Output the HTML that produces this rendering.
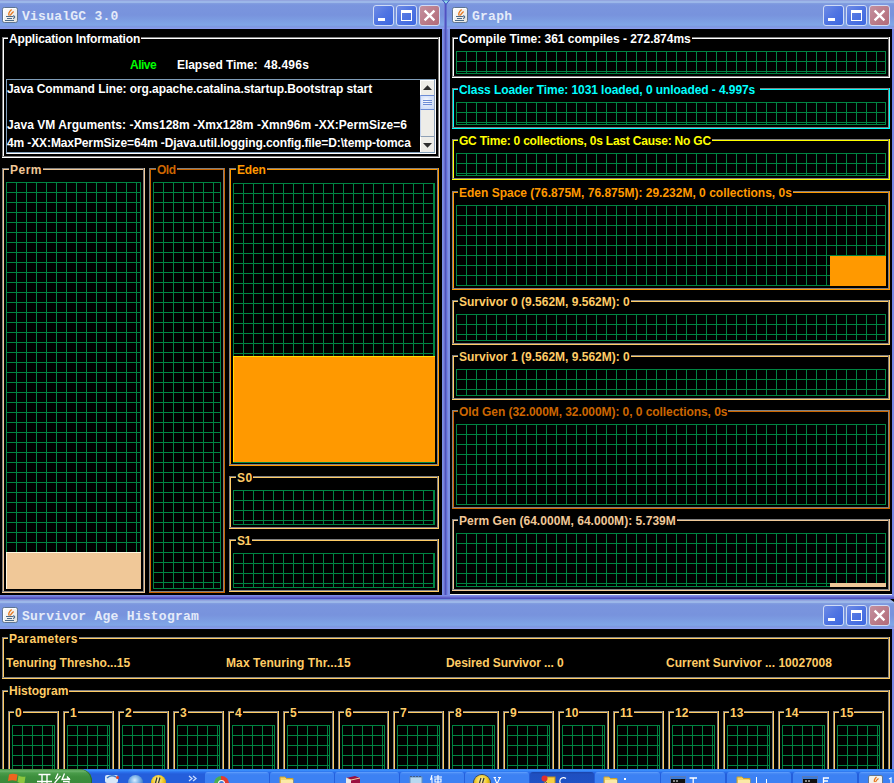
<!DOCTYPE html><html><head><meta charset="utf-8"><style>
*{margin:0;padding:0;box-sizing:border-box}
html,body{width:894px;height:783px;overflow:hidden;background:#000}
body{position:relative}
body>div,body>span,body>svg{position:absolute}
.t{font-family:'Liberation Sans',sans-serif;font-weight:bold;font-size:12px;line-height:14px;white-space:pre}
.g{background-image:linear-gradient(to right,#008442 1px,transparent 1px),linear-gradient(to bottom,#008442 1px,transparent 1px);background-size:10px 10px;box-shadow:inset -1px -1px 0 #008442}
.tb{background:linear-gradient(to bottom,#93a5df 0,#93a5df 1px,#9cb7e9 1px,#9cb7e9 3px,#84a0e0 3px,#7a95de 5px,#7893dd 15px,#80a6e7 25px,#7c95de 27px,#8a9eee 28px,#8a9eee 29px)}
.tt{font-family:'Liberation Mono',monospace;font-size:13px;line-height:14px;color:#e4ebf9;white-space:pre;font-weight:bold;letter-spacing:0.25px}
.ic{width:16px;height:16px}
.bt{width:21px;height:21px;border:1px solid #d0dcf6;border-radius:3px;background:linear-gradient(135deg,#6e8ce6 0,#4f74e2 50%,#3e68e0 100%)}
.bt.cl{background:linear-gradient(135deg,#c4909e,#b26a78)}
.sb{background:#eeede8;border-top:1px solid #fff;border-left:1px solid #fff}
.th{background:radial-gradient(ellipse at 40% 40%,#fff 0,#dfe8fb 40%,#c4d5f4 100%);border-top:1px solid #6c8cd6;border-bottom:1px solid #6c8cd6;border-left:1px solid #a8bff0}
.task{background:linear-gradient(to bottom,#3168d5 0,#3d95ff 1px,#2b72ee 3px,#245edb 5px,#245edb 14px)}
.start{background:linear-gradient(to bottom,#3a8a3a 0,#6cb46c 2px,#4a9c4a 4px,#3c8e3c 8px,#3a8a3a 14px);border-radius:0 12px 0 0;box-shadow:inset -1px 0 0 #2a6a2a}
.tbtn{background:linear-gradient(to bottom,#6aa8ff 0,#4a8cf6 1px,#3c81f3 3px,#3c81f3 14px);border-radius:3px 3px 0 0}
.tbtn.act{background:linear-gradient(to bottom,#1a44a8 0,#1e4fc0 2px,#1f52c6 14px)}
</style></head><body><div style="left:442px;top:29px;width:8px;height:570px;background:linear-gradient(to right,#7b8fe8 0px,#7b8fe8 1px,#7586de 1px,#7586de 2px,#6a6cc8 2px,#6a6cc8 3px,#4f52bd 3px,#4f52bd 4px,#5c6dd2 4px,#5c6dd2 5px,#7a80dc 5px,#7a80dc 6px,#7a92e6 6px,#7a92e6 7px,#7a90e4 7px,#7a90e4 8px);"></div>
<div style="left:0px;top:595px;width:894px;height:5px;background:linear-gradient(to bottom,#7b8ae6 0px,#7b8ae6 1px,#7078d8 1px,#7078d8 2px,#6062c8 2px,#6062c8 3px,#4e52be 3px,#4e52be 4px,#7090dc 4px,#7090dc 5px);"></div>
<div style="left:892px;top:29px;width:2px;height:566px;background:#7888e4;"></div>
<div style="left:892px;top:629px;width:2px;height:140px;background:#7888e4;"></div>
<div class="tb" style="left:0px;top:0px;width:445px;height:29px"></div>
<div class="ic" style="left:2px;top:7px"><svg width="16" height="16" viewBox="0 0 16 16"><defs><linearGradient id="ig02" x1="0" y1="0" x2="1" y2="1"><stop offset="0" stop-color="#ffffff"/><stop offset="1" stop-color="#e2e2de"/></linearGradient></defs><rect x="0.5" y="0.5" width="15" height="15" rx="1.8" fill="url(#ig02)" stroke="#5f7590"/><path d="M1.5 14 V2.5 Q1.5 1.5 2.5 1.5 H14" stroke="#ffffff" stroke-width="1" fill="none"/><path d="M7.2 8.6 Q5.6 6.2 9.6 2.6 M8.2 8.6 Q9.2 6.4 11.6 4.4" stroke="#e8761c" stroke-width="1.3" fill="none"/><path d="M4 9.5 H11 M5 11.5 H10 M3 13.5 H12" stroke="#4d6b88" stroke-width="1"/><path d="M11.2 8.6 Q14.2 10 11.2 11.6" stroke="#4d6b88" stroke-width="1.2" fill="none"/></svg></div>
<span class="tt" style="left:22px;top:10px">VisualGC 3.0</span>
<div class="bt" style="left:373px;top:5px"><div style="position:absolute;left:4px;top:12px;width:7px;height:3px;background:#fff"></div></div>
<div class="bt" style="left:396px;top:5px"><div style="position:absolute;left:4px;top:4px;width:9px;height:7px;border:1px solid #fff;border-top-width:3px;box-sizing:content-box"></div></div>
<div class="bt cl" style="left:419px;top:5px"><svg width="21" height="21" style="position:absolute;left:0;top:0"><path d="M4.6 4.6 L14.4 14.4 M14.4 4.6 L4.6 14.4" stroke="#fff" stroke-width="2.3"/></svg></div>
<div class="tb" style="left:446px;top:0px;width:448px;height:29px"></div>
<div class="ic" style="left:452px;top:7px"><svg width="16" height="16" viewBox="0 0 16 16"><defs><linearGradient id="ig0452" x1="0" y1="0" x2="1" y2="1"><stop offset="0" stop-color="#ffffff"/><stop offset="1" stop-color="#e2e2de"/></linearGradient></defs><rect x="0.5" y="0.5" width="15" height="15" rx="1.8" fill="url(#ig0452)" stroke="#5f7590"/><path d="M1.5 14 V2.5 Q1.5 1.5 2.5 1.5 H14" stroke="#ffffff" stroke-width="1" fill="none"/><path d="M7.2 8.6 Q5.6 6.2 9.6 2.6 M8.2 8.6 Q9.2 6.4 11.6 4.4" stroke="#e8761c" stroke-width="1.3" fill="none"/><path d="M4 9.5 H11 M5 11.5 H10 M3 13.5 H12" stroke="#4d6b88" stroke-width="1"/><path d="M11.2 8.6 Q14.2 10 11.2 11.6" stroke="#4d6b88" stroke-width="1.2" fill="none"/></svg></div>
<span class="tt" style="left:472px;top:10px">Graph</span>
<div style="left:444px;top:3px;width:3px;height:26px;background:linear-gradient(to right,#7078d4 0,#7078d4 1px,#5052c0 1px,#5052c0 2px,#6070d0 2px);"></div>
<svg style="position:absolute;left:442px;top:0" width="8" height="6"><path d="M0.5 0 L7.5 0 L4 4.5 Z" fill="#8cd8e8" stroke="#4050c0" stroke-width="1"/></svg>
<div class="bt" style="left:823px;top:5px"><div style="position:absolute;left:4px;top:12px;width:7px;height:3px;background:#fff"></div></div>
<div class="bt" style="left:846px;top:5px"><div style="position:absolute;left:4px;top:4px;width:9px;height:7px;border:1px solid #fff;border-top-width:3px;box-sizing:content-box"></div></div>
<div class="bt cl" style="left:869px;top:5px"><svg width="21" height="21" style="position:absolute;left:0;top:0"><path d="M4.6 4.6 L14.4 14.4 M14.4 4.6 L4.6 14.4" stroke="#fff" stroke-width="2.3"/></svg></div>
<div class="tb" style="left:0px;top:600px;width:894px;height:29px"></div>
<div class="ic" style="left:2px;top:607px"><svg width="16" height="16" viewBox="0 0 16 16"><defs><linearGradient id="ig6002" x1="0" y1="0" x2="1" y2="1"><stop offset="0" stop-color="#ffffff"/><stop offset="1" stop-color="#e2e2de"/></linearGradient></defs><rect x="0.5" y="0.5" width="15" height="15" rx="1.8" fill="url(#ig6002)" stroke="#5f7590"/><path d="M1.5 14 V2.5 Q1.5 1.5 2.5 1.5 H14" stroke="#ffffff" stroke-width="1" fill="none"/><path d="M7.2 8.6 Q5.6 6.2 9.6 2.6 M8.2 8.6 Q9.2 6.4 11.6 4.4" stroke="#e8761c" stroke-width="1.3" fill="none"/><path d="M4 9.5 H11 M5 11.5 H10 M3 13.5 H12" stroke="#4d6b88" stroke-width="1"/><path d="M11.2 8.6 Q14.2 10 11.2 11.6" stroke="#4d6b88" stroke-width="1.2" fill="none"/></svg></div>
<span class="tt" style="left:22px;top:610px">Survivor Age Histogram</span>
<svg style="position:absolute;left:890px;top:599px" width="4" height="3"><path d="M0 0 H4 V3 Z" fill="#000"/></svg>
<div class="bt" style="left:823px;top:605px"><div style="position:absolute;left:4px;top:12px;width:7px;height:3px;background:#fff"></div></div>
<div class="bt" style="left:846px;top:605px"><div style="position:absolute;left:4px;top:4px;width:9px;height:7px;border:1px solid #fff;border-top-width:3px;box-sizing:content-box"></div></div>
<div class="bt cl" style="left:869px;top:605px"><svg width="21" height="21" style="position:absolute;left:0;top:0"><path d="M4.6 4.6 L14.4 14.4 M14.4 4.6 L4.6 14.4" stroke="#fff" stroke-width="2.3"/></svg></div>
<div style="left:2px;top:37px;width:437px;height:120px;border:1px solid #808080"></div>
<div style="left:3px;top:38px;width:435px;height:1px;background:#ffffff"></div>
<div style="left:3px;top:38px;width:1px;height:118px;background:#ffffff"></div>
<div style="left:2px;top:157px;width:438px;height:1px;background:#ffffff"></div>
<div style="left:439px;top:37px;width:1px;height:121px;background:#ffffff"></div>
<span class="t" style="left:8px;top:32px;color:#ffffff;padding:0 1px 0 1px;background:#000;letter-spacing:-0.155px;">Application Information</span>
<span class="t" style="left:130px;top:58px;color:#00ff00;letter-spacing:-0.500px;">Alive</span>
<span class="t" style="left:177px;top:58px;color:#ffffff;letter-spacing:-0.050px;">Elapsed Time:</span>
<span class="t" style="left:264px;top:58px;color:#ffffff;letter-spacing:0.250px;">48.496s</span>
<div style="left:6px;top:79px;width:430px;height:75px;border:1px solid;border-color:#7f9db9 #fff #fff #7f9db9;box-shadow:inset -1px -1px 0 #7f9db9"></div>
<span class="t" style="left:7px;top:82px;color:#ffffff;letter-spacing:-0.069px;">Java Command Line: org.apache.catalina.startup.Bootstrap start</span>
<span class="t" style="left:7px;top:118px;color:#ffffff;letter-spacing:0.043px;">Java VM Arguments: -Xms128m -Xmx128m -Xmn96m -XX:PermSize=6</span>
<span class="t" style="left:7px;top:136px;color:#ffffff;letter-spacing:-0.113px;">4m -XX:MaxPermSize=64m -Djava.util.logging.config.file=D:\temp-tomca</span>
<div style="left:420px;top:80px;width:14px;height:72px;background:#eeede8;border-left:1px solid #c4d3ee"></div>
<div class="sb" style="left:420px;top:80px;width:14px;height:15px"><svg width="13" height="14" style="position:absolute;left:0;top:0"><path d="M2 9 L6.5 4.2 L11 9 Z" fill="#2e2e2e"/></svg></div>
<div class="sb" style="left:420px;top:136px;width:14px;height:16px;border-top:1px solid #8ea0b6"><svg width="13" height="14" style="position:absolute;left:0;top:0"><path d="M2 6 L11 6 L6.5 10.8 Z" fill="#2e2e2e"/></svg></div>
<div class="th" style="left:420px;top:95px;width:14px;height:15px"><svg width="14" height="13" style="position:absolute;left:0;top:0"><path d="M2 4.5 H11 M2 6.5 H11 M2 8.5 H11" stroke="#6c8cd6" stroke-width="1"/></svg></div>
<div style="left:434px;top:80px;width:1px;height:72px;background:#8ea0b6"></div>
<div style="left:2px;top:168px;width:142px;height:424px;border:1px solid #808080"></div>
<div style="left:3px;top:169px;width:140px;height:1px;background:#f0c898"></div>
<div style="left:3px;top:169px;width:1px;height:422px;background:#f0c898"></div>
<div style="left:2px;top:592px;width:143px;height:1px;background:#f0c898"></div>
<div style="left:144px;top:168px;width:1px;height:425px;background:#f0c898"></div>
<span class="t" style="left:9px;top:163px;color:#f0c898;padding:0 1px 0 1px;background:#000;letter-spacing:0.500px;">Perm</span>
<div class="g" style="left:6px;top:182px;width:135px;height:407px"></div>
<div style="left:6px;top:552px;width:135px;height:37px;background:#f0c898;box-shadow:inset 1px 1px 0 #fff8e0;"></div>
<div style="left:149px;top:168px;width:75px;height:424px;border:1px solid #808080"></div>
<div style="left:150px;top:169px;width:73px;height:1px;background:#cc6600"></div>
<div style="left:150px;top:169px;width:1px;height:422px;background:#cc6600"></div>
<div style="left:149px;top:592px;width:76px;height:1px;background:#cc6600"></div>
<div style="left:224px;top:168px;width:1px;height:425px;background:#cc6600"></div>
<span class="t" style="left:156px;top:163px;color:#cc6600;padding:0 1px 0 1px;background:#000;letter-spacing:-0.500px;">Old</span>
<div class="g" style="left:153px;top:182px;width:68px;height:407px"></div>
<div style="left:229px;top:168px;width:209px;height:297px;border:1px solid #808080"></div>
<div style="left:230px;top:169px;width:207px;height:1px;background:#ff9900"></div>
<div style="left:230px;top:169px;width:1px;height:295px;background:#ff9900"></div>
<div style="left:229px;top:465px;width:210px;height:1px;background:#ff9900"></div>
<div style="left:438px;top:168px;width:1px;height:298px;background:#ff9900"></div>
<span class="t" style="left:236px;top:163px;color:#ff9900;padding:0 1px 0 1px;background:#000;letter-spacing:-0.200px;">Eden</span>
<div class="g" style="left:233px;top:183px;width:202px;height:280px"></div>
<div style="left:233px;top:356px;width:202px;height:106px;background:#ff9900;box-shadow:inset 1px 1px 0 #ffdd00;"></div>
<div style="left:229px;top:476px;width:209px;height:52px;border:1px solid #808080"></div>
<div style="left:230px;top:477px;width:207px;height:1px;background:#ffcc66"></div>
<div style="left:230px;top:477px;width:1px;height:50px;background:#ffcc66"></div>
<div style="left:229px;top:528px;width:210px;height:1px;background:#ffcc66"></div>
<div style="left:438px;top:476px;width:1px;height:53px;background:#ffcc66"></div>
<span class="t" style="left:236px;top:471px;color:#ffcc66;padding:0 1px 0 1px;background:#000;letter-spacing:0.400px;">S0</span>
<div class="g" style="left:233px;top:490px;width:202px;height:35px"></div>
<div style="left:229px;top:539px;width:209px;height:52px;border:1px solid #808080"></div>
<div style="left:230px;top:540px;width:207px;height:1px;background:#ffcc66"></div>
<div style="left:230px;top:540px;width:1px;height:50px;background:#ffcc66"></div>
<div style="left:229px;top:591px;width:210px;height:1px;background:#ffcc66"></div>
<div style="left:438px;top:539px;width:1px;height:53px;background:#ffcc66"></div>
<span class="t" style="left:236px;top:534px;color:#ffcc66;padding:0 1px 0 1px;background:#000;letter-spacing:-0.500px;">S1</span>
<div class="g" style="left:233px;top:553px;width:202px;height:35px"></div>
<div style="left:450px;top:594px;width:442px;height:1px;background:#f0f0f0;"></div>
<div style="left:452px;top:37px;width:437px;height:40px;border:1px solid #808080"></div>
<div style="left:453px;top:38px;width:435px;height:1px;background:#ffffff"></div>
<div style="left:453px;top:38px;width:1px;height:38px;background:#ffffff"></div>
<div style="left:452px;top:77px;width:438px;height:1px;background:#ffffff"></div>
<div style="left:889px;top:37px;width:1px;height:41px;background:#ffffff"></div>
<span class="t" style="left:458px;top:32px;color:#ffffff;padding:0 1px 0 1px;background:#000;letter-spacing:-0.022px;">Compile Time: 361 compiles - 272.874ms</span>
<div class="g" style="left:456px;top:51px;width:430px;height:23px"></div>
<div style="left:452px;top:88px;width:437px;height:40px;border:1px solid #808080"></div>
<div style="left:453px;top:89px;width:435px;height:1px;background:#00ffff"></div>
<div style="left:453px;top:89px;width:1px;height:38px;background:#00ffff"></div>
<div style="left:452px;top:128px;width:438px;height:1px;background:#00ffff"></div>
<div style="left:889px;top:88px;width:1px;height:41px;background:#00ffff"></div>
<span class="t" style="left:458px;top:83px;color:#00ffff;padding:0 1px 0 1px;background:#000;letter-spacing:-0.072px;">Class Loader Time: 1031 loaded, 0 unloaded - 4.997s </span>
<div class="g" style="left:456px;top:102px;width:430px;height:23px"></div>
<div style="left:452px;top:139px;width:437px;height:40px;border:1px solid #808080"></div>
<div style="left:453px;top:140px;width:435px;height:1px;background:#ffff00"></div>
<div style="left:453px;top:140px;width:1px;height:38px;background:#ffff00"></div>
<div style="left:452px;top:179px;width:438px;height:1px;background:#ffff00"></div>
<div style="left:889px;top:139px;width:1px;height:41px;background:#ffff00"></div>
<span class="t" style="left:458px;top:134px;color:#ffff00;padding:0 1px 0 1px;background:#000;letter-spacing:-0.212px;">GC Time: 0 collections, 0s Last Cause: No GC</span>
<div class="g" style="left:456px;top:153px;width:430px;height:23px"></div>
<div style="left:452px;top:191px;width:437px;height:98px;border:1px solid #808080"></div>
<div style="left:453px;top:192px;width:435px;height:1px;background:#ff9900"></div>
<div style="left:453px;top:192px;width:1px;height:96px;background:#ff9900"></div>
<div style="left:452px;top:289px;width:438px;height:1px;background:#ff9900"></div>
<div style="left:889px;top:191px;width:1px;height:99px;background:#ff9900"></div>
<span class="t" style="left:458px;top:186px;color:#ff9900;padding:0 1px 0 1px;background:#000;">Eden Space (76.875M, 76.875M): 29.232M, 0 collections, 0s</span>
<div class="g" style="left:456px;top:205px;width:430px;height:81px"></div>
<div style="left:452px;top:300px;width:437px;height:44px;border:1px solid #808080"></div>
<div style="left:453px;top:301px;width:435px;height:1px;background:#ffcc66"></div>
<div style="left:453px;top:301px;width:1px;height:42px;background:#ffcc66"></div>
<div style="left:452px;top:344px;width:438px;height:1px;background:#ffcc66"></div>
<div style="left:889px;top:300px;width:1px;height:45px;background:#ffcc66"></div>
<span class="t" style="left:458px;top:295px;color:#ffcc66;padding:0 1px 0 1px;background:#000;">Survivor 0 (9.562M, 9.562M): 0</span>
<div class="g" style="left:456px;top:314px;width:430px;height:27px"></div>
<div style="left:452px;top:355px;width:437px;height:44px;border:1px solid #808080"></div>
<div style="left:453px;top:356px;width:435px;height:1px;background:#ffcc66"></div>
<div style="left:453px;top:356px;width:1px;height:42px;background:#ffcc66"></div>
<div style="left:452px;top:399px;width:438px;height:1px;background:#ffcc66"></div>
<div style="left:889px;top:355px;width:1px;height:45px;background:#ffcc66"></div>
<span class="t" style="left:458px;top:350px;color:#ffcc66;padding:0 1px 0 1px;background:#000;">Survivor 1 (9.562M, 9.562M): 0</span>
<div class="g" style="left:456px;top:369px;width:430px;height:27px"></div>
<div style="left:452px;top:410px;width:437px;height:98px;border:1px solid #808080"></div>
<div style="left:453px;top:411px;width:435px;height:1px;background:#cc6600"></div>
<div style="left:453px;top:411px;width:1px;height:96px;background:#cc6600"></div>
<div style="left:452px;top:508px;width:438px;height:1px;background:#cc6600"></div>
<div style="left:889px;top:410px;width:1px;height:99px;background:#cc6600"></div>
<span class="t" style="left:458px;top:405px;color:#cc6600;padding:0 1px 0 1px;background:#000;letter-spacing:-0.064px;">Old Gen (32.000M, 32.000M): 0, 0 collections, 0s</span>
<div class="g" style="left:456px;top:424px;width:430px;height:81px"></div>
<div style="left:452px;top:519px;width:437px;height:71px;border:1px solid #808080"></div>
<div style="left:453px;top:520px;width:435px;height:1px;background:#f0c898"></div>
<div style="left:453px;top:520px;width:1px;height:69px;background:#f0c898"></div>
<div style="left:452px;top:590px;width:438px;height:1px;background:#f0c898"></div>
<div style="left:889px;top:519px;width:1px;height:72px;background:#f0c898"></div>
<span class="t" style="left:458px;top:514px;color:#f0c898;padding:0 1px 0 1px;background:#000;letter-spacing:0.041px;">Perm Gen (64.000M, 64.000M): 5.739M</span>
<div class="g" style="left:456px;top:533px;width:430px;height:54px"></div>
<div style="left:830px;top:256px;width:56px;height:30px;background:#ff9900;"></div>
<div style="left:830px;top:583px;width:56px;height:4px;background:#f0c898;"></div>
<div style="left:2px;top:637px;width:887px;height:41px;border:1px solid #808080"></div>
<div style="left:3px;top:638px;width:885px;height:1px;background:#ffcc66"></div>
<div style="left:3px;top:638px;width:1px;height:39px;background:#ffcc66"></div>
<div style="left:2px;top:678px;width:888px;height:1px;background:#ffcc66"></div>
<div style="left:889px;top:637px;width:1px;height:42px;background:#ffcc66"></div>
<span class="t" style="left:8px;top:632px;color:#ffcc66;padding:0 1px 0 1px;background:#000;letter-spacing:0.344px;">Parameters</span>
<span class="t" style="left:6px;top:656px;color:#ffcc66;letter-spacing:-0.020px;">Tenuring Thresho...15</span>
<span class="t" style="left:226px;top:656px;color:#ffcc66;letter-spacing:0.105px;">Max Tenuring Thr...15</span>
<span class="t" style="left:446px;top:656px;color:#ffcc66;letter-spacing:-0.081px;">Desired Survivor ... 0</span>
<span class="t" style="left:666px;top:656px;color:#ffcc66;letter-spacing:0.018px;">Current Survivor ... 10027008</span>
<div style="left:2px;top:690px;width:887px;height:110px;border:1px solid #808080"></div>
<div style="left:3px;top:691px;width:885px;height:1px;background:#ffcc66"></div>
<div style="left:3px;top:691px;width:1px;height:108px;background:#ffcc66"></div>
<div style="left:2px;top:800px;width:888px;height:1px;background:#ffcc66"></div>
<div style="left:889px;top:690px;width:1px;height:111px;background:#ffcc66"></div>
<span class="t" style="left:8px;top:684px;color:#ffcc66;padding:0 1px 0 1px;background:#000;">Histogram</span>
<div style="left:8px;top:711px;width:50px;height:89px;border:1px solid #808080"></div>
<div style="left:9px;top:712px;width:48px;height:1px;background:#ffcc66"></div>
<div style="left:9px;top:712px;width:1px;height:87px;background:#ffcc66"></div>
<div style="left:8px;top:800px;width:51px;height:1px;background:#ffcc66"></div>
<div style="left:58px;top:711px;width:1px;height:90px;background:#ffcc66"></div>
<span class="t" style="left:14px;top:706px;color:#ffcc66;padding:0 1px 0 1px;background:#000;">0</span>
<div class="g" style="left:12px;top:725px;width:43px;height:76px"></div>
<div style="left:63px;top:711px;width:50px;height:89px;border:1px solid #808080"></div>
<div style="left:64px;top:712px;width:48px;height:1px;background:#ffcc66"></div>
<div style="left:64px;top:712px;width:1px;height:87px;background:#ffcc66"></div>
<div style="left:63px;top:800px;width:51px;height:1px;background:#ffcc66"></div>
<div style="left:113px;top:711px;width:1px;height:90px;background:#ffcc66"></div>
<span class="t" style="left:69px;top:706px;color:#ffcc66;padding:0 1px 0 1px;background:#000;">1</span>
<div class="g" style="left:67px;top:725px;width:43px;height:76px"></div>
<div style="left:118px;top:711px;width:50px;height:89px;border:1px solid #808080"></div>
<div style="left:119px;top:712px;width:48px;height:1px;background:#ffcc66"></div>
<div style="left:119px;top:712px;width:1px;height:87px;background:#ffcc66"></div>
<div style="left:118px;top:800px;width:51px;height:1px;background:#ffcc66"></div>
<div style="left:168px;top:711px;width:1px;height:90px;background:#ffcc66"></div>
<span class="t" style="left:124px;top:706px;color:#ffcc66;padding:0 1px 0 1px;background:#000;">2</span>
<div class="g" style="left:122px;top:725px;width:43px;height:76px"></div>
<div style="left:173px;top:711px;width:50px;height:89px;border:1px solid #808080"></div>
<div style="left:174px;top:712px;width:48px;height:1px;background:#ffcc66"></div>
<div style="left:174px;top:712px;width:1px;height:87px;background:#ffcc66"></div>
<div style="left:173px;top:800px;width:51px;height:1px;background:#ffcc66"></div>
<div style="left:223px;top:711px;width:1px;height:90px;background:#ffcc66"></div>
<span class="t" style="left:179px;top:706px;color:#ffcc66;padding:0 1px 0 1px;background:#000;">3</span>
<div class="g" style="left:177px;top:725px;width:43px;height:76px"></div>
<div style="left:228px;top:711px;width:50px;height:89px;border:1px solid #808080"></div>
<div style="left:229px;top:712px;width:48px;height:1px;background:#ffcc66"></div>
<div style="left:229px;top:712px;width:1px;height:87px;background:#ffcc66"></div>
<div style="left:228px;top:800px;width:51px;height:1px;background:#ffcc66"></div>
<div style="left:278px;top:711px;width:1px;height:90px;background:#ffcc66"></div>
<span class="t" style="left:234px;top:706px;color:#ffcc66;padding:0 1px 0 1px;background:#000;">4</span>
<div class="g" style="left:232px;top:725px;width:43px;height:76px"></div>
<div style="left:283px;top:711px;width:50px;height:89px;border:1px solid #808080"></div>
<div style="left:284px;top:712px;width:48px;height:1px;background:#ffcc66"></div>
<div style="left:284px;top:712px;width:1px;height:87px;background:#ffcc66"></div>
<div style="left:283px;top:800px;width:51px;height:1px;background:#ffcc66"></div>
<div style="left:333px;top:711px;width:1px;height:90px;background:#ffcc66"></div>
<span class="t" style="left:289px;top:706px;color:#ffcc66;padding:0 1px 0 1px;background:#000;">5</span>
<div class="g" style="left:287px;top:725px;width:43px;height:76px"></div>
<div style="left:338px;top:711px;width:50px;height:89px;border:1px solid #808080"></div>
<div style="left:339px;top:712px;width:48px;height:1px;background:#ffcc66"></div>
<div style="left:339px;top:712px;width:1px;height:87px;background:#ffcc66"></div>
<div style="left:338px;top:800px;width:51px;height:1px;background:#ffcc66"></div>
<div style="left:388px;top:711px;width:1px;height:90px;background:#ffcc66"></div>
<span class="t" style="left:344px;top:706px;color:#ffcc66;padding:0 1px 0 1px;background:#000;">6</span>
<div class="g" style="left:342px;top:725px;width:43px;height:76px"></div>
<div style="left:393px;top:711px;width:50px;height:89px;border:1px solid #808080"></div>
<div style="left:394px;top:712px;width:48px;height:1px;background:#ffcc66"></div>
<div style="left:394px;top:712px;width:1px;height:87px;background:#ffcc66"></div>
<div style="left:393px;top:800px;width:51px;height:1px;background:#ffcc66"></div>
<div style="left:443px;top:711px;width:1px;height:90px;background:#ffcc66"></div>
<span class="t" style="left:399px;top:706px;color:#ffcc66;padding:0 1px 0 1px;background:#000;">7</span>
<div class="g" style="left:397px;top:725px;width:43px;height:76px"></div>
<div style="left:448px;top:711px;width:50px;height:89px;border:1px solid #808080"></div>
<div style="left:449px;top:712px;width:48px;height:1px;background:#ffcc66"></div>
<div style="left:449px;top:712px;width:1px;height:87px;background:#ffcc66"></div>
<div style="left:448px;top:800px;width:51px;height:1px;background:#ffcc66"></div>
<div style="left:498px;top:711px;width:1px;height:90px;background:#ffcc66"></div>
<span class="t" style="left:454px;top:706px;color:#ffcc66;padding:0 1px 0 1px;background:#000;">8</span>
<div class="g" style="left:452px;top:725px;width:43px;height:76px"></div>
<div style="left:503px;top:711px;width:50px;height:89px;border:1px solid #808080"></div>
<div style="left:504px;top:712px;width:48px;height:1px;background:#ffcc66"></div>
<div style="left:504px;top:712px;width:1px;height:87px;background:#ffcc66"></div>
<div style="left:503px;top:800px;width:51px;height:1px;background:#ffcc66"></div>
<div style="left:553px;top:711px;width:1px;height:90px;background:#ffcc66"></div>
<span class="t" style="left:509px;top:706px;color:#ffcc66;padding:0 1px 0 1px;background:#000;">9</span>
<div class="g" style="left:507px;top:725px;width:43px;height:76px"></div>
<div style="left:558px;top:711px;width:50px;height:89px;border:1px solid #808080"></div>
<div style="left:559px;top:712px;width:48px;height:1px;background:#ffcc66"></div>
<div style="left:559px;top:712px;width:1px;height:87px;background:#ffcc66"></div>
<div style="left:558px;top:800px;width:51px;height:1px;background:#ffcc66"></div>
<div style="left:608px;top:711px;width:1px;height:90px;background:#ffcc66"></div>
<span class="t" style="left:564px;top:706px;color:#ffcc66;padding:0 1px 0 1px;background:#000;">10</span>
<div class="g" style="left:562px;top:725px;width:43px;height:76px"></div>
<div style="left:613px;top:711px;width:50px;height:89px;border:1px solid #808080"></div>
<div style="left:614px;top:712px;width:48px;height:1px;background:#ffcc66"></div>
<div style="left:614px;top:712px;width:1px;height:87px;background:#ffcc66"></div>
<div style="left:613px;top:800px;width:51px;height:1px;background:#ffcc66"></div>
<div style="left:663px;top:711px;width:1px;height:90px;background:#ffcc66"></div>
<span class="t" style="left:619px;top:706px;color:#ffcc66;padding:0 1px 0 1px;background:#000;">11</span>
<div class="g" style="left:617px;top:725px;width:43px;height:76px"></div>
<div style="left:668px;top:711px;width:50px;height:89px;border:1px solid #808080"></div>
<div style="left:669px;top:712px;width:48px;height:1px;background:#ffcc66"></div>
<div style="left:669px;top:712px;width:1px;height:87px;background:#ffcc66"></div>
<div style="left:668px;top:800px;width:51px;height:1px;background:#ffcc66"></div>
<div style="left:718px;top:711px;width:1px;height:90px;background:#ffcc66"></div>
<span class="t" style="left:674px;top:706px;color:#ffcc66;padding:0 1px 0 1px;background:#000;">12</span>
<div class="g" style="left:672px;top:725px;width:43px;height:76px"></div>
<div style="left:723px;top:711px;width:50px;height:89px;border:1px solid #808080"></div>
<div style="left:724px;top:712px;width:48px;height:1px;background:#ffcc66"></div>
<div style="left:724px;top:712px;width:1px;height:87px;background:#ffcc66"></div>
<div style="left:723px;top:800px;width:51px;height:1px;background:#ffcc66"></div>
<div style="left:773px;top:711px;width:1px;height:90px;background:#ffcc66"></div>
<span class="t" style="left:729px;top:706px;color:#ffcc66;padding:0 1px 0 1px;background:#000;">13</span>
<div class="g" style="left:727px;top:725px;width:43px;height:76px"></div>
<div style="left:778px;top:711px;width:50px;height:89px;border:1px solid #808080"></div>
<div style="left:779px;top:712px;width:48px;height:1px;background:#ffcc66"></div>
<div style="left:779px;top:712px;width:1px;height:87px;background:#ffcc66"></div>
<div style="left:778px;top:800px;width:51px;height:1px;background:#ffcc66"></div>
<div style="left:828px;top:711px;width:1px;height:90px;background:#ffcc66"></div>
<span class="t" style="left:784px;top:706px;color:#ffcc66;padding:0 1px 0 1px;background:#000;">14</span>
<div class="g" style="left:782px;top:725px;width:43px;height:76px"></div>
<div style="left:833px;top:711px;width:50px;height:89px;border:1px solid #808080"></div>
<div style="left:834px;top:712px;width:48px;height:1px;background:#ffcc66"></div>
<div style="left:834px;top:712px;width:1px;height:87px;background:#ffcc66"></div>
<div style="left:833px;top:800px;width:51px;height:1px;background:#ffcc66"></div>
<div style="left:883px;top:711px;width:1px;height:90px;background:#ffcc66"></div>
<span class="t" style="left:839px;top:706px;color:#ffcc66;padding:0 1px 0 1px;background:#000;">15</span>
<div class="g" style="left:837px;top:725px;width:43px;height:76px"></div>
<div class="task" style="left:0;top:769px;width:894px;height:14px"></div>
<div class="start" style="left:0;top:769px;width:92px;height:20px"></div>
<svg style="position:absolute;left:7px;top:773px" width="20" height="10"><path d="M2 1.5 Q5.5 0 10.5 1.5 L9.5 8 Q5 6.5 1 8 Z" fill="#f0641e"/><path d="M11.5 2.5 Q15 4.5 18.5 3.5 L17.5 10 Q14 11 10.5 9 Z" fill="#8cc63e"/></svg>
<svg style="position:absolute;left:37px;top:773px" width="36" height="10"><path d="M1.5 1.5 H13.5 M0 8.5 H15 M5 1.5 V10 M10 1.5 V10" stroke="#fff" stroke-width="1.4" fill="none"/><path d="M21 0.5 L18.5 6 M23.5 3 L17.5 10 M27.5 0.5 L25 6.5 L33 6 M30 3.5 L33 7 M26 8.5 H32 V10" stroke="#fff" stroke-width="1.3" fill="none"/></svg>
<svg style="position:absolute;left:104px;top:773px" width="16" height="10"><rect x="1" y="2" width="13" height="8" rx="2" fill="#d8e8f8"/><path d="M3 5 Q7 1 12 4" stroke="#3a78c8" stroke-width="1.5" fill="none"/><circle cx="13.5" cy="4.5" r="1.5" fill="#e04020"/></svg>
<div style="left:128px;top:775px;width:15px;height:15px;border-radius:50%;background:radial-gradient(circle at 45% 35%,#d6ecff 0,#7fb4e8 35%,#2f6fc0 75%)"></div>
<div style="left:151px;top:775px;width:15px;height:15px;border-radius:50%;background:radial-gradient(circle at 45% 35%,#fff4b0 0,#f0c820 45%,#b08000 90%)"></div>
<svg style="position:absolute;left:154px;top:777px" width="8" height="6"><path d="M3 0.5 L1.5 6 M6 0.5 L4.5 6" stroke="#303030" stroke-width="1.2"/></svg>
<svg style="position:absolute;left:188px;top:775px" width="10" height="7"><path d="M1 1 L4 3.5 L1 6 M5 1 L8 3.5 L5 6" stroke="#c8dcff" stroke-width="1.3" fill="none"/></svg>
<div class="tbtn" style="left:205px;top:772px;width:64px;height:14px"></div>
<div class="tbtn" style="left:270px;top:772px;width:64px;height:14px"></div>
<div class="tbtn" style="left:335px;top:772px;width:64px;height:14px"></div>
<div class="tbtn" style="left:400px;top:772px;width:64px;height:14px"></div>
<div class="tbtn" style="left:465px;top:772px;width:64px;height:14px"></div>
<div class="tbtn act" style="left:530px;top:772px;width:64px;height:14px"></div>
<div class="tbtn" style="left:595px;top:772px;width:65px;height:14px"></div>
<div class="tbtn" style="left:661px;top:772px;width:64px;height:14px"></div>
<div class="tbtn" style="left:727px;top:772px;width:64px;height:14px"></div>
<div class="tbtn" style="left:793px;top:772px;width:64px;height:14px"></div>
<div class="tbtn" style="left:859px;top:772px;width:42px;height:14px"></div>
<div style="left:214px;top:776px;width:15px;height:15px;border-radius:50%;background:conic-gradient(#e33b2e 0 120deg,#fbc02d 120deg 240deg,#4caf50 240deg 360deg)"></div><div style="left:219px;top:781px;width:5px;height:5px;border-radius:50%;background:#3b7ddd;box-shadow:0 0 0 1px #fff"></div>
<svg style="position:absolute;left:279px;top:775px" width="16" height="9"><path d="M1 2 H6 L7.5 3.5 H14 V9 H1 Z" fill="#f5d36a" stroke="#c9a030" stroke-width="1"/><rect x="2" y="5" width="12" height="4" fill="#fbe9a6"/></svg>
<svg style="position:absolute;left:345px;top:775px" width="16" height="9"><path d="M1 3 L10 1 L15 3 L15 9 L6 9 Z" fill="#9a1040"/><path d="M1 3 L6 5 L15 3" stroke="#f0d0a0" stroke-width="1" fill="none"/><path d="M1 3 V9 L6 9 V5Z" fill="#e8e8e8"/></svg>
<svg style="position:absolute;left:409px;top:776px" width="14" height="8"><rect x="1" y="1" width="12" height="8" fill="#b8d8f0" stroke="#6890b8"/><path d="M2 1 V0 M5 1 V0 M8 1 V0 M11 1 V0" stroke="#333"/></svg>
<svg style="position:absolute;left:429px;top:775px" width="14" height="9"><path d="M3 0 L1.5 5 M3 2.5 V9 M5 2 H13 M9 0 V9 M6 4 H12 V7 H6 Z" stroke="#fff" stroke-width="1.1" fill="none"/></svg>
<div style="left:474px;top:775px;width:16px;height:16px;border-radius:50%;background:radial-gradient(circle at 45% 35%,#fff4b0 0,#f0c820 45%,#a07800 90%);box-shadow:0 0 0 1px #404040"></div>
<svg style="position:absolute;left:478px;top:777px" width="8" height="7"><path d="M3 1 L1.5 6 M6 1 L4.5 6" stroke="#333" stroke-width="1.2"/></svg>
<svg style="position:absolute;left:493px;top:777px" width="9" height="7"><path d="M0.5 0.5 H3 M5 0.5 H8 M1.5 0.5 L4 7 L7 0.5" stroke="#fff" stroke-width="1.1" fill="none"/></svg>
<svg style="position:absolute;left:540px;top:774px" width="16" height="10"><rect x="5" y="3" width="10" height="8" fill="#f8d040" stroke="#c09020"/><circle cx="4.5" cy="4.5" r="3" fill="#e03030"/><path d="M5 7 L9 11" stroke="#606060"/></svg>
<svg style="position:absolute;left:559px;top:777px" width="9" height="7"><path d="M7 1.5 Q4 -0.5 1.5 2 Q0 5 2 7" stroke="#fff" stroke-width="1.2" fill="none"/></svg>
<svg style="position:absolute;left:603px;top:775px" width="16" height="9"><path d="M1 2 H6 L7.5 3.5 H14 V9 H1 Z" fill="#f5d36a" stroke="#c9a030" stroke-width="1"/><rect x="2" y="5" width="12" height="4" fill="#fbe9a6"/></svg>
<div style="left:624px;top:778px;width:2px;height:2px;background:#fff"></div>
<svg style="position:absolute;left:670px;top:776px" width="16" height="8"><rect x="0.5" y="0.5" width="15" height="8" fill="#101010" stroke="#5a7ab8"/><rect x="1" y="1" width="14" height="2" fill="#3a7ad8"/><path d="M3 5 H5 M6 5 H8" stroke="#fff" stroke-width="1"/></svg>
<svg style="position:absolute;left:689px;top:777px" width="9" height="7"><path d="M0.5 1 H8 M4.2 1 V7" stroke="#fff" stroke-width="1.3"/></svg>
<svg style="position:absolute;left:736px;top:775px" width="16" height="9"><path d="M1 2 H6 L7.5 3.5 H14 V9 H1 Z" fill="#f5d36a" stroke="#c9a030" stroke-width="1"/><rect x="2" y="5" width="12" height="4" fill="#fbe9a6"/></svg>
<div style="left:756px;top:777px;width:1px;height:7px;background:#fff"></div><div style="left:766px;top:779px;width:1px;height:5px;background:#fff"></div>
<svg style="position:absolute;left:802px;top:776px" width="16" height="8"><rect x="0.5" y="0.5" width="15" height="8" fill="#101010" stroke="#5a7ab8"/><rect x="1" y="1" width="14" height="2" fill="#3a7ad8"/><path d="M3 5 H5 M6 5 H8" stroke="#fff" stroke-width="1"/></svg>
<svg style="position:absolute;left:822px;top:777px" width="9" height="7"><path d="M1.5 7 V1 H7 M1.5 4 H6" stroke="#fff" stroke-width="1.3" fill="none"/></svg>
<svg style="position:absolute;left:868px;top:775px" width="15" height="9"><rect x="0.5" y="0.5" width="14" height="10" rx="1.5" fill="#f4f2ec" stroke="#5f7590"/><path d="M6.5 7 Q5.5 5 8.5 2 M7.5 7 Q8.5 5 10.5 3.5" stroke="#e8761c" stroke-width="1.2" fill="none"/></svg>
<svg style="position:absolute;left:888px;top:777px" width="6" height="7"><path d="M1 2 L3 1 V7" stroke="#fff" stroke-width="1.2" fill="none"/></svg></body></html>
